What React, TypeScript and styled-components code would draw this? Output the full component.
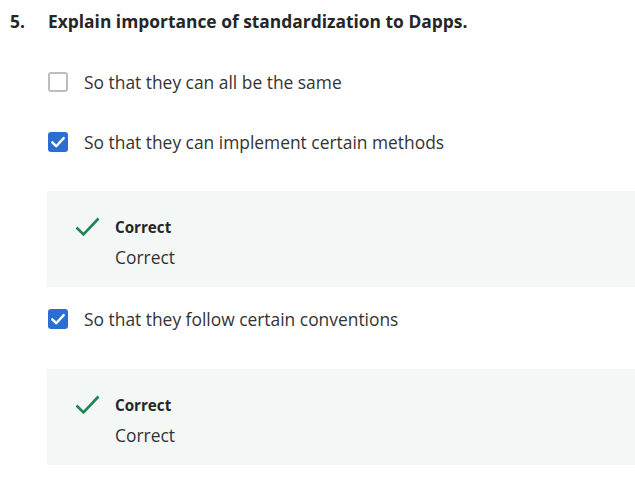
import React from "react";
import styled, { createGlobalStyle } from "styled-components";

const GlobalStyle = createGlobalStyle`
  html, body {
    margin: 0;
    padding: 0;
    background: #ffffff;
    font-family: "Open Sans", "Noto Sans", sans-serif;
    color: #1f1f1f;
  }
`;

const Page = styled.div`
  padding-top: 9px;
  width: 635px;
  overflow: hidden;
`;

const Title = styled.div`
  display: flex;
  font-size: 17.4px;
  line-height: 24px;
  font-weight: 700;
  color: #262626;
`;

const Number = styled.span`
  width: 48px;
  padding-left: 10px;
  box-sizing: border-box;
`;

const Options = styled.div`
  display: flex;
  flex-direction: column;
  padding-left: 48px;
  margin-top: 37px;
`;

const Option = styled.label<{ $gap: number }>`
  display: flex;
  align-items: center;
  gap: 16px;
  font-size: 17.4px;
  line-height: 24px;
  color: #333333;
  margin-bottom: ${(p) => p.$gap}px;
`;

const Box = styled.span<{ $checked?: boolean }>`
  width: 20px;
  height: 20px;
  box-sizing: border-box;
  border-radius: 3px;
  display: flex;
  align-items: center;
  justify-content: center;
  flex-shrink: 0;
  border: ${(p) => (p.$checked ? "none" : "2px solid #bdbdbd")};
  background: ${(p) => (p.$checked ? "#2b6ed3" : "#ffffff")};
`;

const Feedback = styled.div<{ $gap: number }>`
  display: flex;
  gap: 15px;
  margin-left: -1px;
  padding: 26px 0 18px 28px;
  background: #f3f8f6;
  margin-bottom: ${(p) => p.$gap}px;
`;

const FeedbackText = styled.div`
  display: flex;
  flex-direction: column;
  gap: 8px;
`;

const FeedbackTitle = styled.div`
  font-size: 15.2px;
  line-height: 20px;
  font-weight: 700;
  color: #262626;
`;

const FeedbackBody = styled.div`
  font-size: 17.4px;
  line-height: 24px;
  color: #333333;
`;

const Tick = () => (
  <svg width="20" height="20" viewBox="0 0 20 20">
    <path d="M4.3 10.3 L8.2 14.2 L15.7 6.1" fill="none" stroke="#fff" strokeWidth="2.4" strokeLinecap="round" strokeLinejoin="round" />
  </svg>
);

const GreenCheck = () => (
  <svg width="25" height="20" viewBox="0 0 25 20" style={{ flexShrink: 0 }}>
    <path d="M1.5 10.5 L8.5 17.5 L23.5 1.5" fill="none" stroke="#1f8354" strokeWidth="2.6" />
  </svg>
);

function FeedbackCard({ gap }: { gap: number }) {
  return (
    <Feedback $gap={gap}>
      <GreenCheck />
      <FeedbackText>
        <FeedbackTitle>Correct</FeedbackTitle>
        <FeedbackBody>Correct</FeedbackBody>
      </FeedbackText>
    </Feedback>
  );
}

export default function App() {
  return (
    <Page>
      <GlobalStyle />
      <Title>
        <Number>5.</Number>
        <span>Explain importance of standardization to Dapps.</span>
      </Title>
      <Options>
        <Option $gap={36}>
          <Box />
          So that they can all be the same
        </Option>
        <Option $gap={37}>
          <Box $checked>
            <Tick />
          </Box>
          So that they can implement certain methods
        </Option>
        <FeedbackCard gap={20} />
        <Option $gap={38}>
          <Box $checked>
            <Tick />
          </Box>
          So that they follow certain conventions
        </Option>
        <FeedbackCard gap={0} />
      </Options>
    </Page>
  );
}
